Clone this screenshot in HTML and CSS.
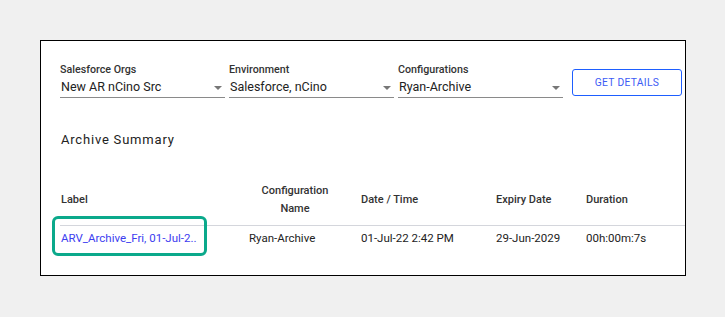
FILE: index.html
```html
<!DOCTYPE html>
<html>
<head>
    <meta name="viewport" content="width=device-width, initial-scale=1.0">
    <title>Archive Summary</title>
    <link rel="stylesheet" href="styles.css">
</head>
<body>
    <div class="card">
        <div class="filters">
            <div class="field">
                <label>Salesforce Orgs</label>
                <div class="select">New AR nCino Src<span class="caret"></span></div>
            </div>
            <div class="field">
                <label>Environment</label>
                <div class="select">Salesforce, nCino<span class="caret"></span></div>
            </div>
            <div class="field">
                <label>Configurations</label>
                <div class="select">Ryan-Archive<span class="caret"></span></div>
            </div>
            <button class="details-btn">GET DETAILS</button>
        </div>

        <h2 class="section-title">Archive Summary</h2>

        <div class="table-wrap">
            <table class="summary">
                <colgroup>
                    <col style="width: 185px">
                    <col style="width: 112px">
                    <col style="width: 135px">
                    <col style="width: 90px">
                    <col style="width: 98px">
                    <col style="width: 100px">
                </colgroup>
                <thead>
                    <tr>
                        <th class="col-label">Label</th>
                        <th class="col-config">Configuration<br>Name</th>
                        <th>Date / Time</th>
                        <th>Expiry Date</th>
                        <th>Duration</th>
                        <th></th>
                    </tr>
                </thead>
                <tbody>
                    <tr>
                        <td class="col-label"><a href="#">ARV_Archive_Fri, 01-Jul-2..</a></td>
                        <td>Ryan-Archive</td>
                        <td>01-Jul-22 2:42 PM</td>
                        <td>29-Jun-2029</td>
                        <td>00h:00m:7s</td>
                        <td></td>
                    </tr>
                </tbody>
            </table>
            <div class="highlight"></div>
        </div>
    </div>
</body>
</html>
```

FILE: styles.css
```css
body {
    font-family: Roboto, 'Noto Sans', sans-serif;
    margin: 0;
    padding: 40px;
    background: #f0f0f0;
    color: #222;
}
.card {
    width: 625px;
    height: 234px;
    background: #fff;
    border: 1px solid #000;
    padding: 0 0 0 19px;
    overflow: hidden;
    box-sizing: content-box;
}
.filters {
    display: flex;
    align-items: flex-start;
    gap: 4px;
    padding-top: 23px;
}
.field {
    width: 165px;
}
.field label {
    display: block;
    font-size: 10.7px;
    font-weight: 500;
    line-height: 12px;
    color: #333;
}
.select {
    position: relative;
    font-size: 12.5px;
    line-height: 20px;
    color: #222;
    padding: 1px 0 0 1px;
    border-bottom: 1px solid #8a8a8a;
}
.caret {
    position: absolute;
    right: 3px;
    top: 10px;
    width: 0;
    height: 0;
    border-left: 4px solid transparent;
    border-right: 4px solid transparent;
    border-top: 4px solid #777;
}
.details-btn {
    margin: 5px 0 0 5px;
    width: 110px;
    height: 27px;
    background: #fff;
    border: 1px solid #1e5eff;
    border-radius: 3px;
    color: #3d5cf5;
    font-family: Roboto, sans-serif;
    font-size: 10.3px;
    letter-spacing: 0.3px;
    cursor: pointer;
}
.section-title {
    margin: 34px 0 0 1px;
    font-size: 13px;
    font-weight: 400;
    letter-spacing: 0.8px;
    line-height: 16px;
    color: #222;
}
.table-wrap {
    position: relative;
    margin-top: 32px;
}
.summary {
    border-collapse: collapse;
    table-layout: fixed;
    width: 720px;
}
.summary th {
    font-size: 11px;
    font-weight: 500;
    color: #333;
    line-height: 18px;
    text-align: left;
    padding: 2px 4px 7px;
    border-bottom: 1px solid #d4d6dc;
    vertical-align: middle;
}
.summary td {
    font-size: 11.5px;
    color: #222;
    padding: 4px 4px 8px;
    line-height: 16px;
    white-space: nowrap;
}
.summary a {
    color: #3d3df0;
    text-decoration: none;
}
.summary .col-label {
    padding-left: 1px;
}
.summary th.col-config {
    text-align: center;
    padding-left: 0;
    padding-right: 12px;
}
.highlight {
    position: absolute;
    left: -8px;
    top: 36px;
    width: 149px;
    height: 34px;
    border: 3px solid #0ba98b;
    border-radius: 6px;
}
```
